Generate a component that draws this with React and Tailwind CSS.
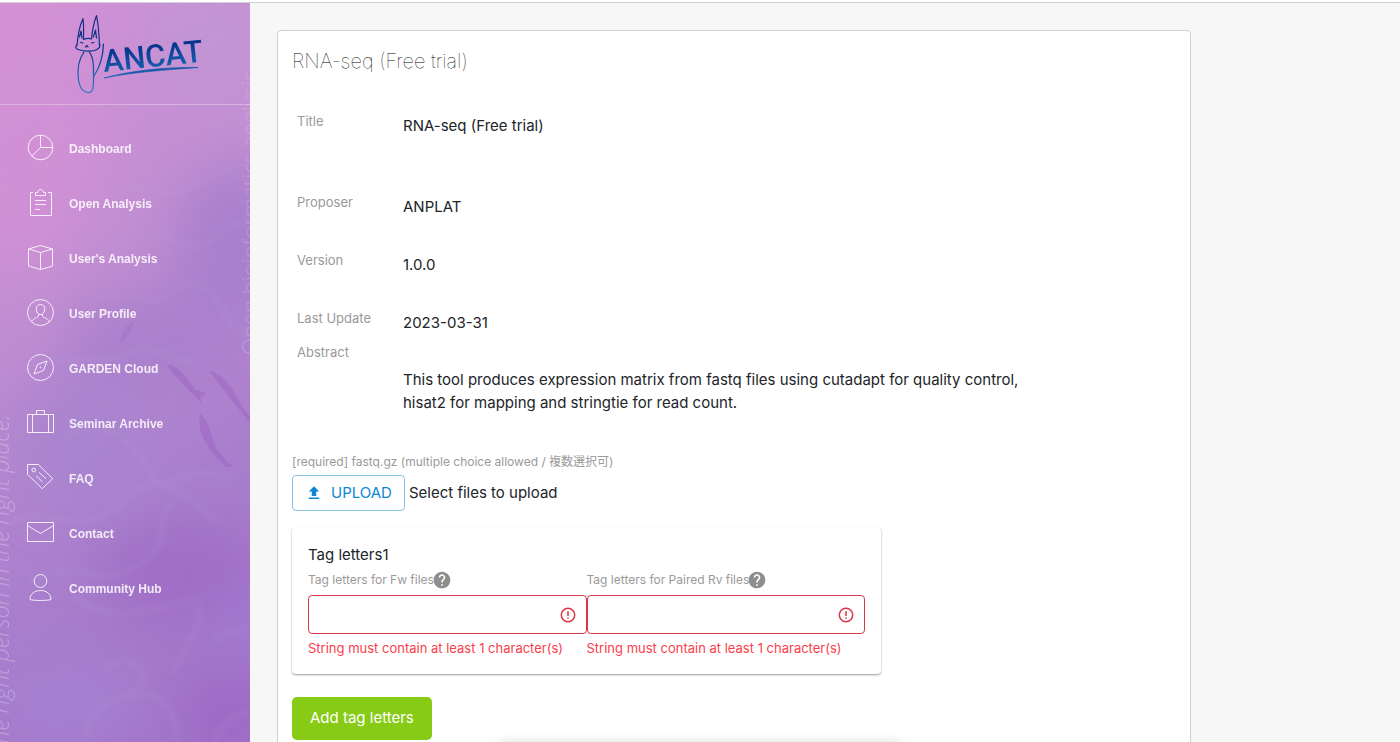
import { useState } from 'react';

const menu = [
    {
        name: 'Dashboard',
        icon: (
            <>
                <circle cx="13.5" cy="13.5" r="12.3" />
                <path d="M13.5 1.2V13.5H25.8M13.5 13.5L4.8 22.2" />
            </>
        ),
    },
    {
        name: 'Open Analysis',
        icon: (
            <>
                <path d="M6 3.5H3.5V26.5H24.5V3.5H21" />
                <path d="M8.5 6.5V3.5H10.5C11 1.5 12 .5 13.5 .5S16 1.5 16.5 3.5H18.5V6.5Z" />
                <path d="M8 11.5H19M8 15.5H19M8 20.5H13" />
            </>
        ),
    },
    {
        name: "User's Analysis",
        icon: (
            <>
                <path d="M13.5 1.5L25.5 5V22L13.5 25.5L1.5 22V5Z" />
                <path d="M1.5 5L13.5 8.5L25.5 5M13.5 8.5V25.5" />
            </>
        ),
    },
    {
        name: 'User Profile',
        icon: (
            <>
                <circle cx="13.5" cy="13.5" r="13" />
                <path d="M13.5 5.5C10.8 5.5 9 7.2 9.3 10.2C9.5 13 11 15.6 13.5 15.6S17.5 13 17.7 10.2C18 7.2 16.2 5.5 13.5 5.5Z" />
                <path d="M11.5 15V17C10.5 19 6.5 18.8 4.6 22.8M15.5 15V17C16.5 19 20.5 18.8 22.4 22.8" />
            </>
        ),
    },
    {
        name: 'GARDEN Cloud',
        icon: (
            <>
                <circle cx="13.5" cy="13.5" r="13" />
                <path d="M20 7L16.5 16.5L7 20L10.5 10.5Z" />
                <circle cx="13.5" cy="13.5" r=".4" />
            </>
        ),
    },
    {
        name: 'Seminar Archive',
        icon: (
            <>
                <path d="M.5 5.5H26.5V23.5H.5ZM5.5 5.5V23.5M21.5 5.5V23.5" />
                <path d="M9.5 5.5V1.5H17.5V5.5" />
            </>
        ),
    },
    {
        name: 'FAQ',
        icon: (
            <>
                <path d="M.5 .5H11.3L25.6 14.7L15.3 24.7L.5 10.3Z" />
                <circle cx="6.7" cy="6" r="1.8" />
                <path d="M12 8.3L19 14.7M9 11.7L15.7 18" />
            </>
        ),
    },
    {
        name: 'Contact',
        icon: <path d="M.5 3.5H26.5V22.5H.5ZM.5 6.5L13.5 14.5L26.5 6.5" />,
    },
    {
        name: 'Community Hub',
        icon: (
            <>
                <ellipse cx="13.5" cy="7" rx="6.3" ry="6.5" />
                <path d="M3 25.5C3 20 7.5 16.5 13.5 16.5S24 20 24 25.5C21 26.8 6 26.8 3 25.5Z" />
            </>
        ),
    },
];

const details = [
    { label: 'Title', value: 'RNA-seq (Free trial)', row: 'min-h-[81px]', top: 'pt-[3px]' },
    { label: 'Proposer', value: 'ANPLAT', row: 'min-h-[58px]', top: 'pt-[3px]' },
    { label: 'Version', value: '1.0.0', row: 'min-h-[58px]', top: 'pt-[3px]' },
    { label: 'Last Update', value: '2023-03-31', row: 'min-h-[34px]', top: 'pt-[3px]' },
    {
        label: 'Abstract',
        value: 'This tool produces expression matrix from fastq files using cutadapt for quality control, hisat2 for mapping and stringtie for read count.',
        row: 'min-h-[110px]',
        top: 'pt-[26px]',
    },
];

function Logo() {
    return (
        <svg className="w-32 h-20" viewBox="0 0 128 80" fill="none" role="img" aria-label="ANCAT">
            <defs>
                <linearGradient id="ink" gradientUnits="userSpaceOnUse" x1="0" y1="0" x2="0" y2="80">
                    <stop offset="0" stopColor="#1b2a80" />
                    <stop offset=".45" stopColor="#06338c" />
                    <stop offset=".75" stopColor="#1560b0" />
                    <stop offset="1" stopColor="#2d7fbd" />
                </linearGradient>
            </defs>
            <g stroke="url(#ink)" strokeWidth="1.2" strokeLinecap="round" strokeLinejoin="round">
                <path d="M2 31C3 20 5 11 8 4.5C9 12 8.5 18 8.5 25.5C12 24 14 24 16.5 25C17.5 15 19 8 21.5 1.5C23.5 11 24 20 24.5 31" />
                <path d="M2 31C0 33 .5 34.5 3 35.5C9 37.5 18 38 22 35.5C24.5 34 25.5 32 24.5 30" />
                <path d="M4.5 23L6 17L7 24M18.5 23L20.5 16L21.5 24" />
                <path d="M5.5 28.5L8 29M16.5 29L19 28.5M10.5 33L12 31.5L13 33" />
                <path d="M9 38C4 45 2 55 3.5 66C5 76 10 79 14 78.5C18 78 18.5 74 18.5 64C18.5 52 19 45 14.5 38" />
                <path d="M19 62C25 53 28 43 28.5 30" />
            </g>
            <text x="29" y="58" transform="rotate(-6 29 58)" fill="url(#ink)" fontSize="31" className="font-['Roboto',sans-serif] font-medium">
                ANCAT
            </text>
            <path d="M29 64C55 57 88 53 123 53.500C90 56 58 58 29 64Z" fill="url(#ink)" stroke="url(#ink)" strokeWidth=".7" />
        </svg>
    );
}

function PondBackground() {
    return (
        <svg className="absolute inset-0 w-full h-full" viewBox="0 0 250 739" preserveAspectRatio="xMinYMin slice" aria-hidden="true">
            <defs>
                <linearGradient id="pond" x1="0" y1="0" x2=".15" y2="1">
                    <stop offset="0" stopColor="#d291d6" />
                    <stop offset=".25" stopColor="#c38fd3" />
                    <stop offset=".5" stopColor="#a97fcd" />
                    <stop offset=".78" stopColor="#a071c8" />
                    <stop offset="1" stopColor="#9d6dc7" />
                </linearGradient>
                <filter id="soft" x="-50%" y="-50%" width="200%" height="200%">
                    <feGaussianBlur stdDeviation="26" />
                </filter>
                <filter id="wisp" x="-20%" y="-20%" width="140%" height="140%">
                    <feGaussianBlur stdDeviation="3" />
                </filter>
            </defs>
            <rect width="250" height="1200" fill="url(#pond)" />
            <g filter="url(#soft)">
                <ellipse cx="20" cy="110" rx="80" ry="160" fill="#d691d5" opacity=".6" />
                <ellipse cx="210" cy="40" rx="70" ry="60" fill="#c096d5" opacity=".8" />
                <ellipse cx="235" cy="240" rx="60" ry="80" fill="#a27ccb" opacity=".7" />
                <ellipse cx="150" cy="340" rx="80" ry="50" fill="#a57dcb" opacity=".7" />
                <ellipse cx="80" cy="440" rx="70" ry="70" fill="#a683ce" opacity=".7" />
                <ellipse cx="180" cy="570" rx="80" ry="50" fill="#9c6ac3" opacity=".7" />
                <ellipse cx="70" cy="700" rx="70" ry="40" fill="#a581d3" opacity=".9" />
                <ellipse cx="225" cy="710" rx="35" ry="35" fill="#995fc0" opacity=".7" />
                <ellipse cx="245" cy="620" rx="30" ry="40" fill="#a07bd3" opacity=".7" />
            </g>
            <g filter="url(#wisp)" fill="none" stroke="#b9a3e0" strokeWidth="4" opacity=".22">
                <path d="M130 190C150 170 160 200 190 185S220 160 245 175" />
                <path d="M140 240C170 220 190 260 215 235S240 230 250 215" />
                <path d="M90 300C120 280 150 310 170 290S210 280 225 310S240 330 250 325" />
                <path d="M20 370C60 340 100 370 130 350S180 380 200 350" />
                <path d="M60 440C90 400 140 440 150 470S200 450 235 480" />
                <path d="M10 520C50 500 80 540 120 500S180 490 220 520" />
                <path d="M30 580C70 550 100 590 140 560S150 530 170 500" />
                <path d="M70 590C100 620 140 610 180 600S190 640 172 670" />
                <path d="M105 665C125 650 140 660 145 675L134 688" />
                <path d="M215 640C220 625 240 635 250 620" />
                <path d="M85 735C90 690 150 680 165 700S175 725 178 739" />
                <path d="M215 739C220 720 235 712 250 708" />
            </g>
            <g fill="#9459bd" opacity=".35">
                <path d="M167 362C178 362 188 376 196 387L206 390L200 394L202 401C194 392 176 376 167 362Z" />
                <path d="M209 368C222 370 232 384 238 396C242 404 246 410 250 413V420C240 407 224 388 209 368Z" />
                <path d="M200 411C208 416 211 432 216 445L228 460L234 463L226 464C212 450 196 433 200 411Z" />
                <path d="M121 340C120 330 128 320 134 318C132 330 126 336 121 340Z" opacity=".5" />
            </g>
            <g fill="#ffffff" className="font-['Open_Sans',sans-serif] font-light">
                <text x="9" y="748" fontSize="23" transform="rotate(-90 9 748)" opacity=".28" fontStyle="italic">the right person in the right place.</text>
                <text x="258" y="352" fontSize="22" transform="rotate(-90 258 352)" opacity=".18">Open bioinformatics analysis</text>
            </g>
        </svg>
    );
}

function Sidebar() {
    return (
        <aside className="relative w-[250px] shrink-0 overflow-hidden bg-[#a87ccb]">
            <PondBackground />
            <div className="relative">
                <div className="h-[102px] flex justify-center pt-[11px] pl-7 border-b border-white/30">
                    <a href="#" className="block h-20">
                        <Logo />
                    </a>
                </div>
                <nav className="pt-[15px]">
                    <ul>
                        {menu.map((item) => (
                            <li key={item.name}>
                                <a href="#" className="flex items-center gap-[15px] h-[55px] pl-[27px] text-white/85 hover:text-white">
                                    <svg className="w-[27px] h-[27px] overflow-visible" viewBox="0 0 27 27" fill="none" stroke="currentColor" strokeWidth="1" aria-hidden="true">
                                        {item.icon}
                                    </svg>
                                    <span className="pt-0.5 font-['Liberation_Sans',sans-serif] text-xs font-bold">{item.name}</span>
                                </a>
                            </li>
                        ))}
                    </ul>
                </nav>
            </div>
        </aside>
    );
}

function TagField({ id, label }) {
    const [value, setValue] = useState('');

    return (
        <div className="flex-1 min-w-0">
            <div className="flex items-center h-5 text-xs text-[#9a9a9a]">
                <label htmlFor={id}>{label}</label>
                <button type="button" aria-label={`Help: ${label}`} className="-ml-0.5 cursor-pointer">
                    <svg className="w-5 h-5" viewBox="0 0 24 24" fill="#8e8e8e">
                        <path d="M12 2C6.48 2 2 6.48 2 12s4.48 10 10 10 10-4.48 10-10S17.52 2 12 2zm1 17h-2v-2h2v2zm2.07-7.75-.9.92C13.45 12.9 13 13.5 13 15h-2v-.5c0-1.1.45-2.1 1.17-2.83l1.24-1.26c.37-.36.59-.86.59-1.41 0-1.1-.9-2-2-2s-2 .9-2 2H8c0-2.21 1.79-4 4-4s4 1.79 4 4c0 .88-.36 1.68-.93 2.25z" />
                    </svg>
                </button>
            </div>
            <div className="flex items-center mt-[5px] h-[39px] pr-2.5 border border-[#dc3545] rounded bg-white">
                <input
                    id={id}
                    type="text"
                    value={value}
                    onChange={(e) => setValue(e.target.value)}
                    aria-invalid="true"
                    aria-describedby={`${id}-error`}
                    className="flex-1 min-w-0 h-full px-3 text-base outline-none"
                />
                <svg className="w-4 h-4 shrink-0" viewBox="0 0 16 16" fill="none" stroke="#dc3545" strokeWidth="1.5" aria-hidden="true">
                    <circle cx="8" cy="8" r="6.7" />
                    <path d="M8 4.2V9M8 10.2V11.8" />
                </svg>
            </div>
            <p id={`${id}-error`} className="mt-1 text-[13px] leading-5 text-[#fb404b]">
                String must contain at least 1 character(s)
            </p>
        </div>
    );
}

export default function App() {
    return (
        <div className="h-screen flex flex-col overflow-hidden bg-[#f7f7f8] font-['Inter','Noto_Sans_CJK_JP',sans-serif] text-[#212529]">
            <div className="h-[3px] shrink-0 bg-white border-b border-[#cfcfcf]"></div>
            <div className="flex flex-1 min-h-0">
                <Sidebar />
                <main className="flex-1 min-w-0 overflow-hidden pt-[27px] px-[27px]">
                    <div className="max-w-[914px] px-3.5 pt-4 pb-8 bg-white border border-[#d0d0d0] rounded">
                        <h1 className="text-xl leading-7 font-thin text-black">RNA-seq (Free trial)</h1>

                        <dl className="mt-9 pl-[5px]">
                            {details.map((item) => (
                                <div key={item.label} className={`flex ${item.row}`}>
                                    <dt className="w-[106px] shrink-0 text-[13px] leading-5 text-[#9a9a9a]">{item.label}</dt>
                                    <dd className={`max-w-[640px] text-[15px] leading-[23px] ${item.top}`}>{item.value}</dd>
                                </div>
                            ))}
                        </dl>

                        {/* File upload */}
                        <p id="fastq-label" className="text-xs leading-5 text-[#9a9a9a]">
                            [required] fastq.gz (multiple choice allowed / 複数選択可)
                        </p>
                        <div className="flex items-center gap-1 mt-[3px]">
                            <button type="button" aria-describedby="fastq-label" className="flex items-center gap-2 h-9 px-3 border border-[#87c1e8] rounded text-[#0d87d1] text-[15px] cursor-pointer">
                                <svg className="w-[18px] h-[18px]" viewBox="0 0 24 24" fill="currentColor" aria-hidden="true">
                                    <path d="M5 20h14v-2H5v2zm0-10h4v6h6v-6h4l-7-7-7 7z" />
                                </svg>
                                UPLOAD
                            </button>
                            <span className="text-[15px]">Select files to upload</span>
                        </div>

                        {/* Tag letters */}
                        <section className="max-w-[589px] mt-4 p-4 rounded shadow-[0_1px_2px_rgba(0,0,0,0.4)]">
                            <h2 className="text-[15px] leading-6">Tag letters1</h2>
                            <div className="flex mt-[3px]">
                                <TagField id="fw-tag" label="Tag letters for Fw files" />
                                <TagField id="rv-tag" label="Tag letters for Paired Rv files" />
                            </div>
                        </section>

                        <button type="button" className="mt-[23px] h-[43px] px-[18px] rounded-[5px] bg-[#87cb16] text-[15px] text-white cursor-pointer">
                            Add tag letters
                        </button>
                    </div>
                </main>
            </div>
            {/* Notification bar resting under the window edge */}
            <div className="fixed top-full left-1/2 -translate-x-1/2 w-[400px] h-10 bg-white shadow-[0_0_10px_rgba(0,0,0,0.15)]"></div>
        </div>
    );
}
